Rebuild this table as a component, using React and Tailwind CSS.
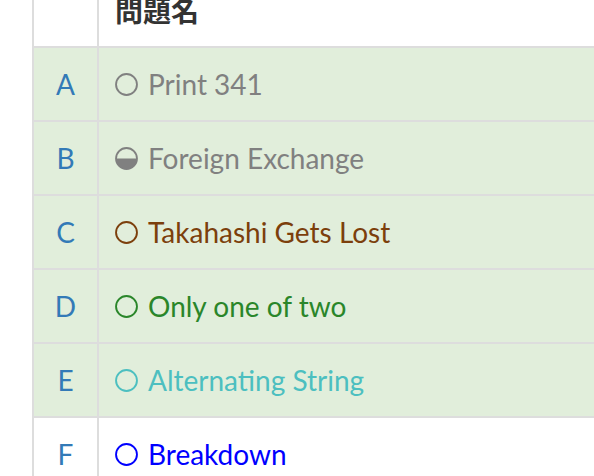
import React from 'react';

const problems = [
  { id: 'A', title: 'Print 341', color: 'text-[#808080]', stroke: '#808080', fill: 0, solved: true },
  { id: 'B', title: 'Foreign Exchange', color: 'text-[#808080]', stroke: '#808080', fill: 0.5, solved: true },
  { id: 'C', title: 'Takahashi Gets Lost', color: 'text-[#7c3f0c]', stroke: '#7c3f0c', fill: 0, solved: true },
  { id: 'D', title: 'Only one of two', color: 'text-[#2a862a]', stroke: '#2a862a', fill: 0, solved: true },
  { id: 'E', title: 'Alternating String', color: 'text-[#4cbfc0]', stroke: '#4cbfc0', fill: 0, solved: true },
  { id: 'F', title: 'Breakdown', color: 'text-[#0000ff]', stroke: '#0000ff', fill: 0, solved: false },
];

// 難易度サークル（fill は下からの塗りつぶし割合）
const DifficultyCircle = ({ stroke, fill }) => {
  const r = 10;
  const y = 11 + r - 2 * r * fill;
  return (
    <svg width="23" height="23" viewBox="0 0 22 22" className="shrink-0">
      <defs>
        <clipPath id={`clip-${stroke}-${fill}`}>
          <rect x="0" y={y} width="22" height="22" />
        </clipPath>
      </defs>
      {fill > 0 && (
        <circle cx="11" cy="11" r={r} fill={stroke} clipPath={`url(#clip-${stroke}-${fill})`} />
      )}
      <circle cx="11" cy="11" r={r} fill="none" stroke={stroke} strokeWidth="1.8" />
    </svg>
  );
};

const App = () => {
  return (
    <div className="w-[594px] h-[476px] overflow-hidden bg-white font-['Lato','Noto_Sans',sans-serif]">
      <div className="-mt-[24px] ml-[32px] w-[640px] border-l-2 border-[#dddddd]">
        {/* ヘッダー */}
        <div className="flex h-[72px] border-b-2 border-[#dddddd]">
          <div className="w-[65px] shrink-0 border-r-2 border-[#dddddd]"></div>
          <div className="flex items-center pl-[16px] text-[28px] font-bold text-[#333333] font-['Lato','Noto_Sans_CJK_JP',sans-serif]">
            問題名
          </div>
        </div>

        {problems.map((p) => (
          <div
            key={p.id}
            className={`flex h-[74px] border-b-2 border-[#dddddd] ${p.solved ? 'bg-[#e1eedb]' : 'bg-white'}`}
          >
            <div className="w-[65px] shrink-0 flex items-center justify-center border-r-2 border-[#dddddd] text-[28px] text-[#337ab7]">
              {p.id}
            </div>
            <div className={`flex items-center gap-[10px] pl-[16px] text-[28px] ${p.color}`}>
              <DifficultyCircle stroke={p.stroke} fill={p.fill} />
              <span>{p.title}</span>
            </div>
          </div>
        ))}
      </div>
    </div>
  );
};

export default App;
